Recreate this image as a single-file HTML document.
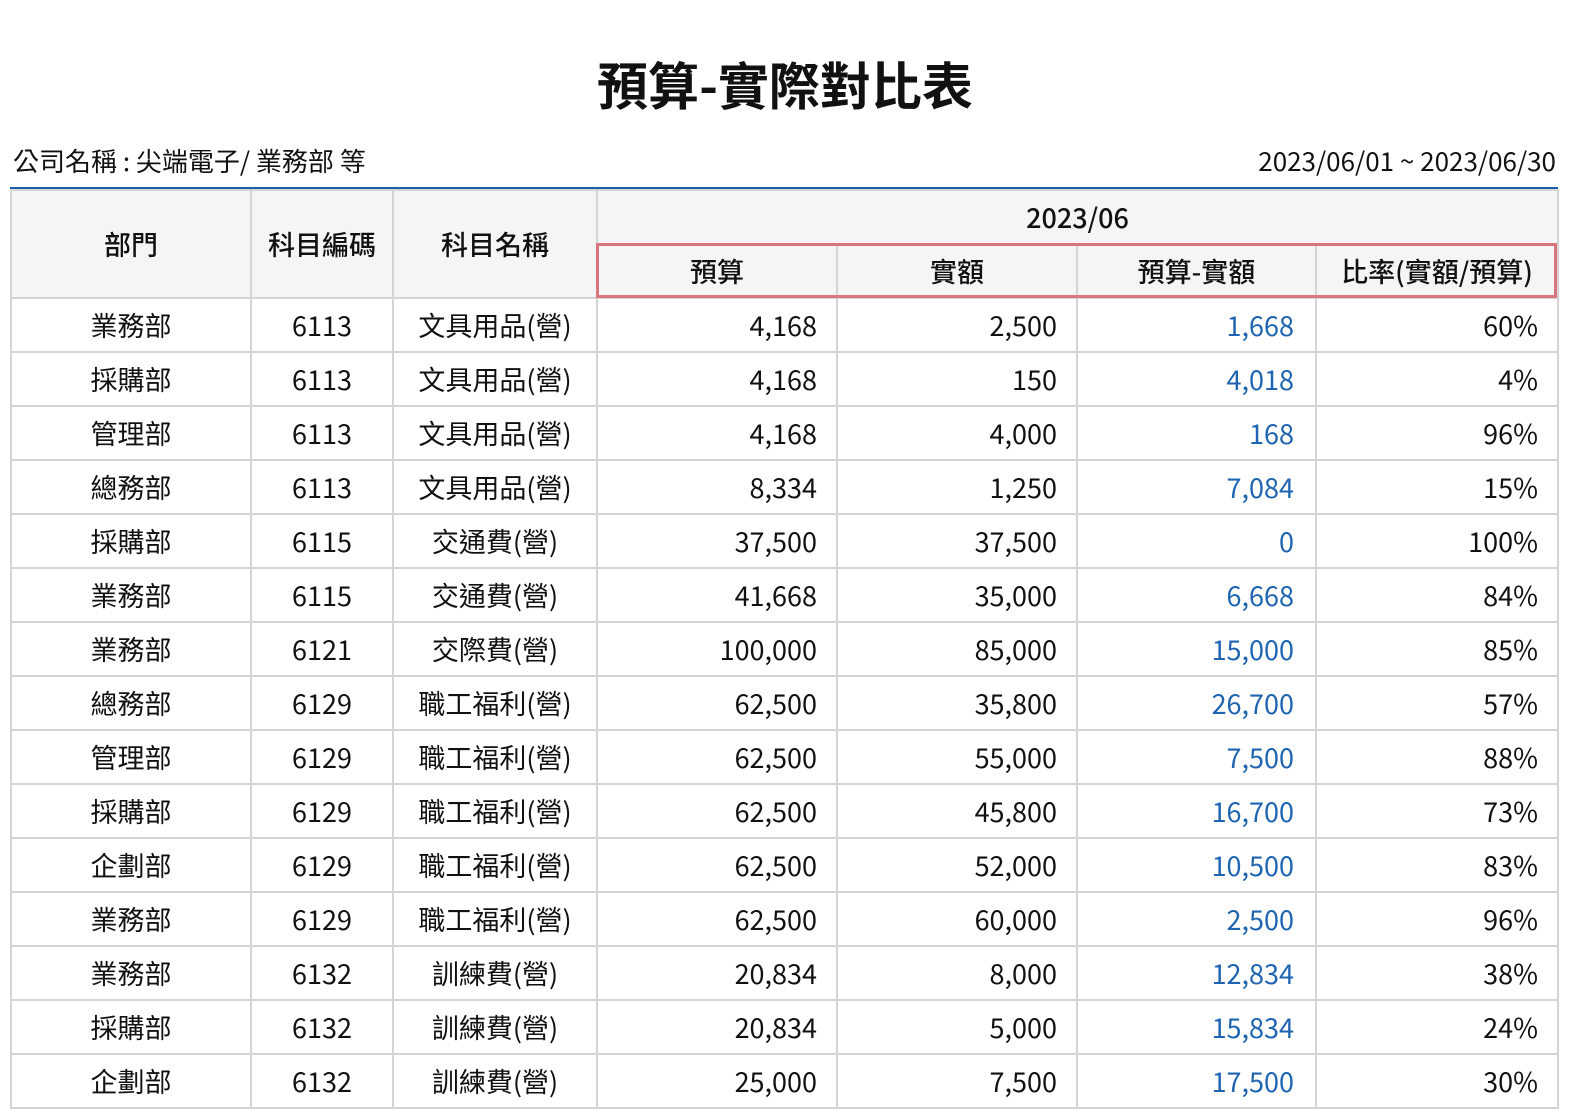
<!DOCTYPE html>
<html><head><meta charset="utf-8"><style>
html,body{margin:0;padding:0;background:#fff;width:1570px;height:1120px;overflow:hidden}
body{font-family:"Liberation Sans","Noto Sans CJK TC",sans-serif;color:#111;position:relative}
.title{position:absolute;top:50px;left:0;width:1570px;text-align:center;font-size:51px;font-weight:bold;line-height:66px;font-family:"Noto Sans CJK TC",sans-serif}
.sub{position:absolute;top:143px;font-size:26px;line-height:36px;font-family:"Noto Sans CJK TC",sans-serif}
.bl{position:absolute;left:10px;top:187px;width:1548px;height:2px;background:#1a5fa8;z-index:3}
table{position:absolute;left:10px;top:189px;border-collapse:collapse;table-layout:fixed;font-family:"Noto Sans CJK TC",sans-serif;font-size:27px}
td,th{border:2px solid #d4d4d4;padding:0;height:52px;line-height:52px;white-space:nowrap}
th{background:#f5f5f5;font-weight:500;font-size:27px}
td{text-align:center}
td.r{text-align:right;padding-right:19px}
td.b{color:#1e64b0;padding-right:21px}
.red{position:absolute;left:596px;top:243px;width:955px;height:49px;border:3px solid #d9757e;z-index:2}
</style></head><body>
<div class="title">預算-實際對比表</div>
<div class="sub" style="left:13px">公司名稱 : 尖端電子/ 業務部 等</div>
<div class="sub" style="right:14px">2023/06/01 ~ 2023/06/30</div>
<div class="bl"></div>
<table>
<colgroup><col style="width:240px"><col style="width:142px"><col style="width:204px"><col style="width:240px"><col style="width:240px"><col style="width:239px"><col style="width:242px"></colgroup>
<tr><th rowspan="2" style="height:106px">部門</th><th rowspan="2">科目編碼</th><th rowspan="2">科目名稱</th><th colspan="4">2023/06</th></tr>
<tr><th>預算</th><th>實額</th><th>預算-實額</th><th>比率(實額/預算)</th></tr>
<tr><td>業務部</td><td>6113</td><td>文具用品(營)</td><td class="r">4,168</td><td class="r">2,500</td><td class="r b">1,668</td><td class="r">60%</td></tr>
<tr><td>採購部</td><td>6113</td><td>文具用品(營)</td><td class="r">4,168</td><td class="r">150</td><td class="r b">4,018</td><td class="r">4%</td></tr>
<tr><td>管理部</td><td>6113</td><td>文具用品(營)</td><td class="r">4,168</td><td class="r">4,000</td><td class="r b">168</td><td class="r">96%</td></tr>
<tr><td>總務部</td><td>6113</td><td>文具用品(營)</td><td class="r">8,334</td><td class="r">1,250</td><td class="r b">7,084</td><td class="r">15%</td></tr>
<tr><td>採購部</td><td>6115</td><td>交通費(營)</td><td class="r">37,500</td><td class="r">37,500</td><td class="r b">0</td><td class="r">100%</td></tr>
<tr><td>業務部</td><td>6115</td><td>交通費(營)</td><td class="r">41,668</td><td class="r">35,000</td><td class="r b">6,668</td><td class="r">84%</td></tr>
<tr><td>業務部</td><td>6121</td><td>交際費(營)</td><td class="r">100,000</td><td class="r">85,000</td><td class="r b">15,000</td><td class="r">85%</td></tr>
<tr><td>總務部</td><td>6129</td><td>職工福利(營)</td><td class="r">62,500</td><td class="r">35,800</td><td class="r b">26,700</td><td class="r">57%</td></tr>
<tr><td>管理部</td><td>6129</td><td>職工福利(營)</td><td class="r">62,500</td><td class="r">55,000</td><td class="r b">7,500</td><td class="r">88%</td></tr>
<tr><td>採購部</td><td>6129</td><td>職工福利(營)</td><td class="r">62,500</td><td class="r">45,800</td><td class="r b">16,700</td><td class="r">73%</td></tr>
<tr><td>企劃部</td><td>6129</td><td>職工福利(營)</td><td class="r">62,500</td><td class="r">52,000</td><td class="r b">10,500</td><td class="r">83%</td></tr>
<tr><td>業務部</td><td>6129</td><td>職工福利(營)</td><td class="r">62,500</td><td class="r">60,000</td><td class="r b">2,500</td><td class="r">96%</td></tr>
<tr><td>業務部</td><td>6132</td><td>訓練費(營)</td><td class="r">20,834</td><td class="r">8,000</td><td class="r b">12,834</td><td class="r">38%</td></tr>
<tr><td>採購部</td><td>6132</td><td>訓練費(營)</td><td class="r">20,834</td><td class="r">5,000</td><td class="r b">15,834</td><td class="r">24%</td></tr>
<tr><td>企劃部</td><td>6132</td><td>訓練費(營)</td><td class="r">25,000</td><td class="r">7,500</td><td class="r b">17,500</td><td class="r">30%</td></tr>
</table>
<div class="red"></div>
</body></html>
